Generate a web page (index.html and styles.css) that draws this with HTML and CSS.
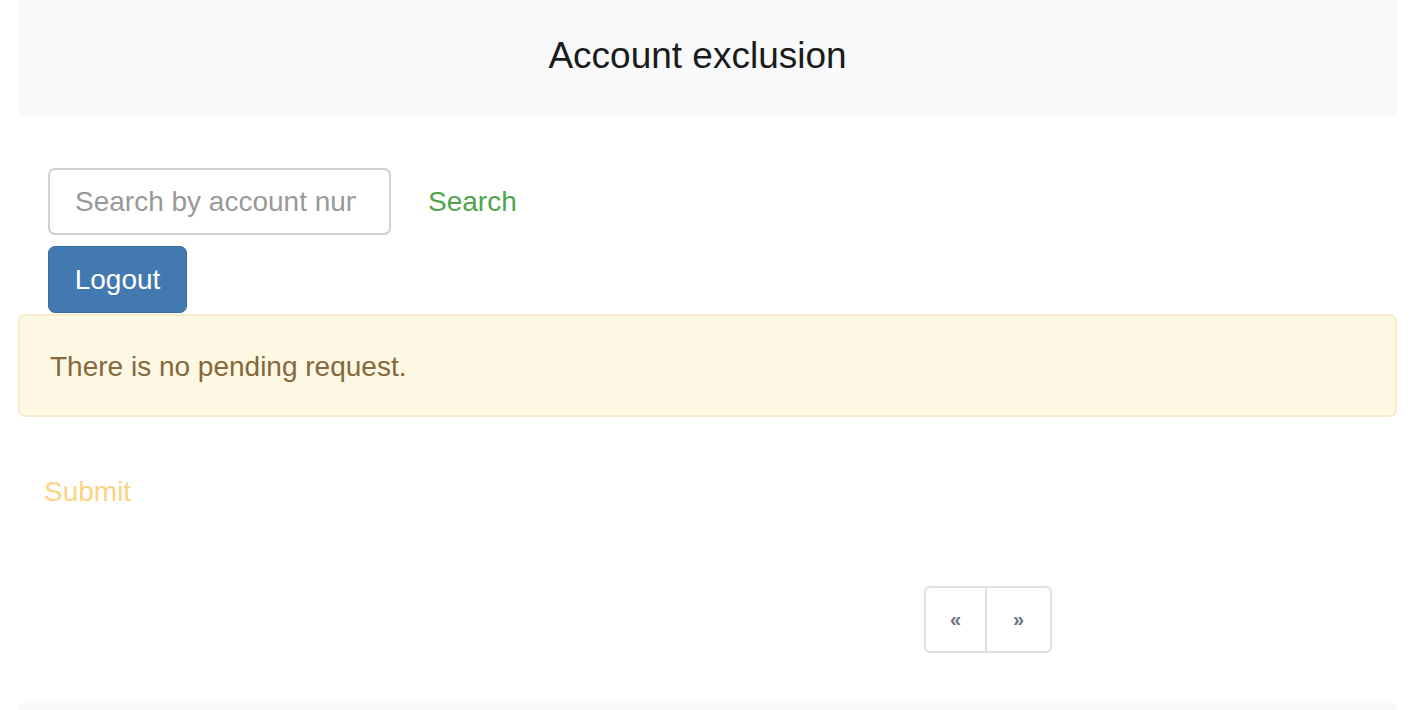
FILE: index.html
```html
<!DOCTYPE html>
<html lang="en">
<head>
<meta charset="utf-8">
<title>Account exclusion</title>
<link rel="stylesheet" href="styles.css">
</head>
<body>
<div class="page">
  <header class="header">
    <h1 class="title">Account exclusion</h1>
  </header>
  <div class="tools">
    <form class="search-row">
      <input class="search-input" type="text" placeholder="Search by account number">
      <button class="btn-search" type="button">Search</button>
    </form>
    <button class="btn-logout" type="button">Logout</button>
  </div>
  <div class="alert">There is no pending request.</div>
  <div class="submit-row">
    <button class="btn-submit" type="button" disabled>Submit</button>
  </div>
  <nav class="pager">
    <a class="page-link first" href="#">&laquo;</a>
    <a class="page-link last" href="#">&raquo;</a>
  </nav>
  <footer class="footer"></footer>
</div>
</body>
</html>
```

FILE: styles.css
```css
* { box-sizing: border-box; }
html, body { margin: 0; padding: 0; }
body {
  font-family: "Liberation Sans", Arial, sans-serif;
  font-size: 28px;
  color: #212529;
  background: #fff;
  overflow: hidden;
}
.page {
  padding: 0 23px 0 18px;
}
.header {
  background: #f8f9fa;
  height: 117px;
  border-radius: 0 0 7px 7px;
  padding: 37px 20px 0 0;
}
.title {
  margin: 0;
  font-size: 37px;
  line-height: 37px;
  font-weight: 400;
  text-align: center;
  color: #1b1b1b;
}
.tools {
  padding: 51px 0 0 30px;
}
.search-row {
  display: flex;
  align-items: center;
  margin: 0;
}
.search-input {
  width: 343px;
  height: 67px;
  border: 2px solid #cfcfcf;
  border-radius: 7px;
  padding: 0 33px 0 25px;
  font-family: inherit;
  font-size: 28px;
  color: #555;
  background: #fff;
}
.search-input::placeholder { color: #999; }
.btn-search {
  margin-left: 37px;
  border: 0;
  background: none;
  padding: 0;
  font-family: inherit;
  font-size: 28px;
  color: #4ba64b;
}
.btn-logout {
  display: block;
  margin-top: 11px;
  width: 139px;
  height: 67px;
  padding: 0;
  border: 1px solid #3a6ca0;
  border-radius: 7px;
  background: #4379b1;
  color: #fff;
  font-family: inherit;
  font-size: 28px;
  line-height: 1;
}
.alert {
  margin-top: 1px;
  height: 103px;
  display: flex;
  align-items: center;
  padding: 3px 30px 0;
  background: #fcf8e3;
  border: 2px solid #f8ebcc;
  border-radius: 7px;
  color: #86683b;
  font-size: 28px;
}
.submit-row {
  padding: 59px 0 0 26px;
}
.btn-submit {
  border: 0;
  background: none;
  padding: 0;
  font-family: inherit;
  font-size: 28px;
  line-height: 32px;
  color: #fcd383;
}
.pager {
  display: flex;
  margin: 78px 0 0 906px;
  width: 128px;
}
.page-link {
  width: 63px;
  height: 67px;
  display: flex;
  align-items: center;
  justify-content: center;
  border: 2px solid #dee2e6;
  color: #6c757d;
  text-decoration: none;
  font-size: 20px;
  font-weight: 700;
  background: #fff;
}
.page-link.first {
  border-radius: 6px 0 0 6px;
}
.page-link.last {
  width: 65px;
  border-left: 0;
  border-radius: 0 6px 6px 0;
}
.footer {
  margin-top: 50px;
  height: 40px;
  background: #f8f9fa;
  border-radius: 7px 7px 0 0;
}
```
